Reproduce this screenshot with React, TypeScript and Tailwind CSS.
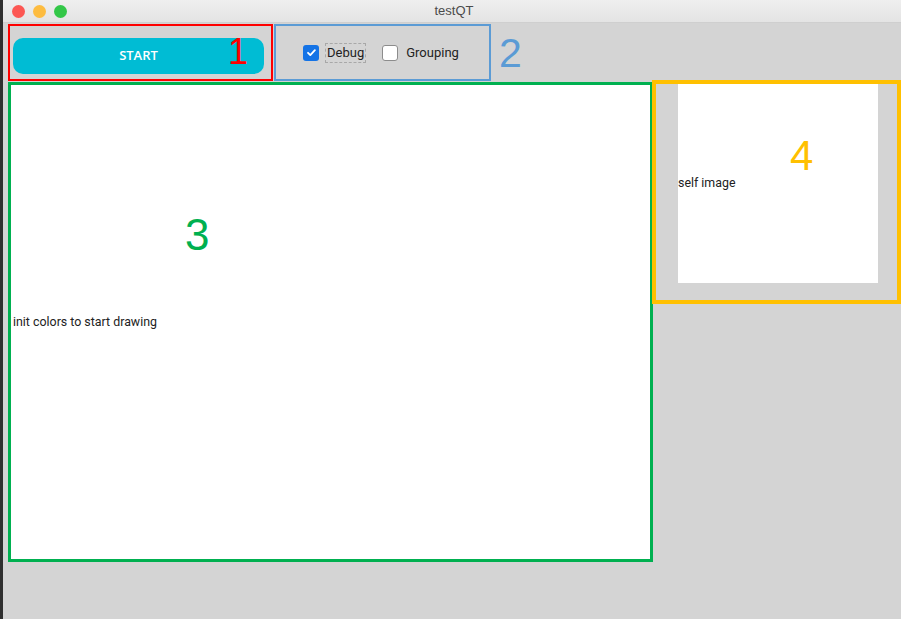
export default function App() {
  return (
    <div className="flex h-[619px] w-[901px] overflow-hidden bg-[#d4d4d4] font-['Roboto',sans-serif] text-[13px] text-[#222]">
      {/* desktop edge */}
      <div className="w-[3px] shrink-0 bg-[#2f2f2f]" />

      <div className="flex min-w-0 flex-1 flex-col">
        {/* title bar */}
        <div className="relative flex h-[23px] shrink-0 items-center justify-center border-b border-[#cfcfcf] bg-gradient-to-b from-[#efefef] to-[#e4e4e4]">
          <div className="absolute left-[9px] top-[5px] flex gap-[8px]">
            <span className="h-[13px] w-[13px] rounded-full bg-[#fc5753]" />
            <span className="h-[13px] w-[13px] rounded-full bg-[#fdbc40]" />
            <span className="h-[13px] w-[13px] rounded-full bg-[#33c748]" />
          </div>
          <span className="ml-[4px] font-['Liberation_Sans',sans-serif] text-[13px] text-[#4b4b4b]">testQT</span>
        </div>

        <div className="flex flex-col pl-[5px] pt-px">
          {/* toolbar row */}
          <div className="flex h-[57px] items-start">
            <div className="relative h-[57px] w-[265px] shrink-0 border-2 border-[#ff0000] pl-[3px] pt-[12px]">
              <button className="flex h-[36px] w-[251px] items-center justify-center rounded-[10px] bg-[#00bcd4] font-['Open_Sans',sans-serif] text-[13px] font-semibold text-white">
                START
              </button>
              <span className="absolute left-[218px] top-[8px] font-['Liberation_Sans',sans-serif] text-[36px] leading-none text-[#ff0000]">1</span>
            </div>

            <div className="ml-px flex h-[57px] w-[217px] shrink-0 items-center border-2 border-[#5b9bd5] pl-[27px]">
              <span className="flex h-[16px] w-[16px] items-center justify-center rounded-[3px] bg-[#1473e6]">
                <svg width="11" height="11" viewBox="0 0 12 12" fill="none">
                  <path d="M2.2 6.3l2.5 2.5 5-5.4" stroke="white" strokeWidth="2" strokeLinecap="round" strokeLinejoin="round" />
                </svg>
              </span>
              <span className="ml-[6px] flex h-[20px] items-center border border-dashed border-[#a8a8a8] px-px">Debug</span>
              <span className="ml-[16px] h-[16px] w-[16px] rounded-[3px] border border-[#8c8c8c] bg-white" />
              <span className="ml-[8px]">Grouping</span>
            </div>

            <span className="ml-[8px] mt-[9px] font-['Liberation_Sans',sans-serif] text-[41px] leading-none text-[#5b9bd5]">2</span>
          </div>

          {/* main row */}
          <div className="flex items-start">
            <div className="relative mt-px flex h-[480px] w-[645px] shrink-0 items-center border-[3px] border-[#00b050] bg-white pl-[2px]">
              <span className="text-[12.4px]">init colors to start drawing</span>
              <span className="absolute left-[174px] top-[128px] font-['Liberation_Sans',sans-serif] text-[44px] leading-none text-[#00b050]">3</span>
            </div>

            <div className="relative -ml-px -mt-px h-[224px] w-[249px] shrink-0 border-4 border-[#ffc000] pl-[22px]">
              <div className="flex h-[199px] w-[200px] items-center bg-white">
                <span className="text-[12.4px]">self image</span>
              </div>
              <span className="absolute left-[134px] top-[51px] font-['Liberation_Sans',sans-serif] text-[42px] leading-none text-[#ffc000]">4</span>
            </div>
          </div>
        </div>
      </div>
    </div>
  );
}
